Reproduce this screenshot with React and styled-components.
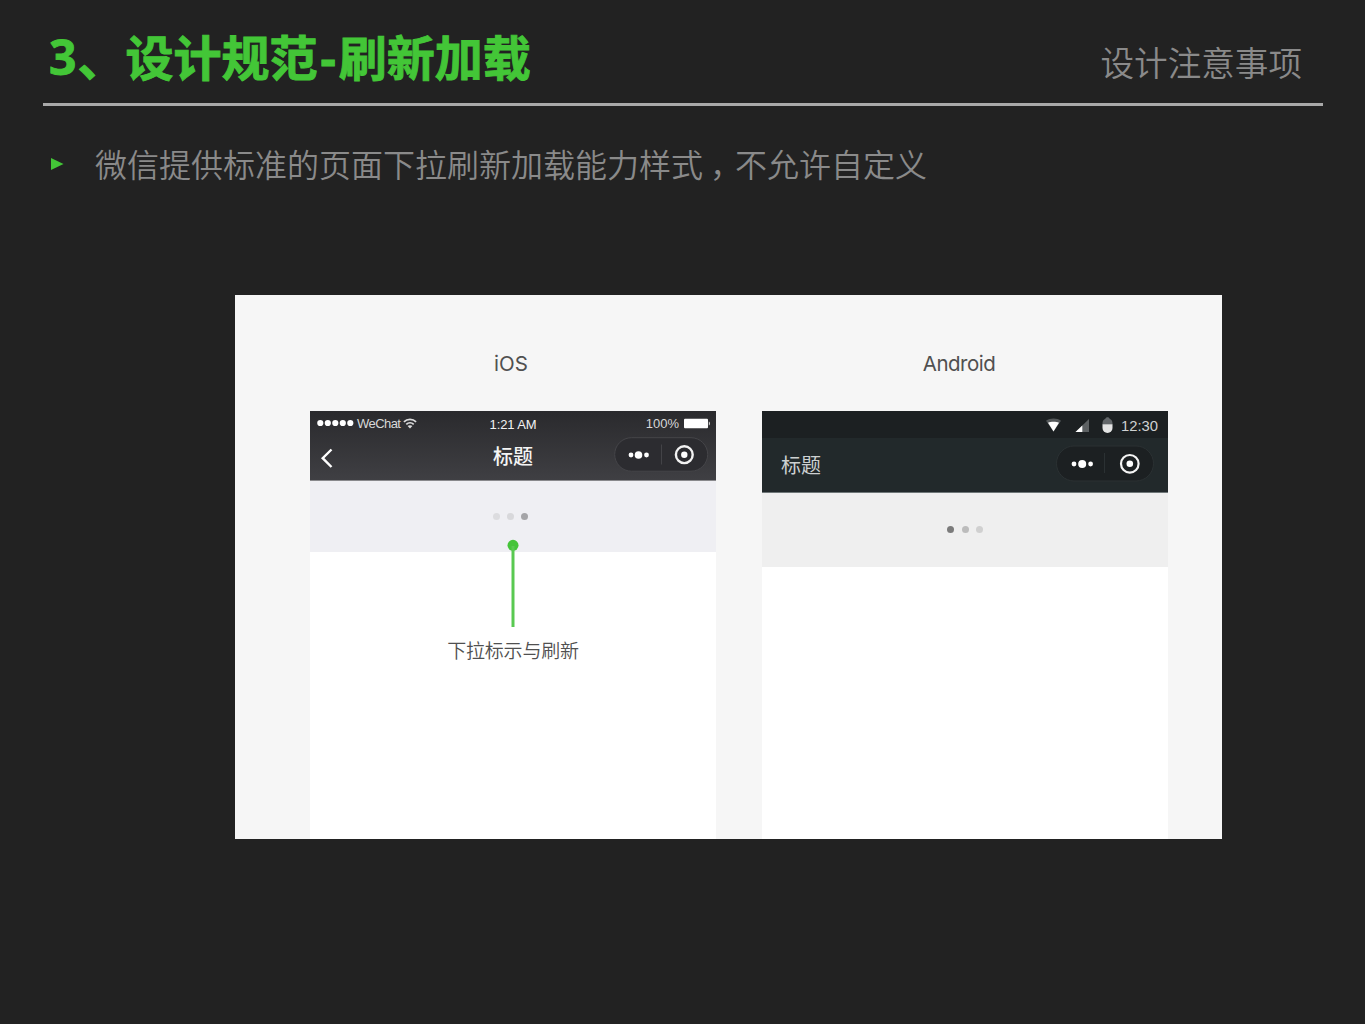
import React from "react";
import styled, { createGlobalStyle } from "styled-components";

const GlobalStyle = createGlobalStyle`
  * { box-sizing: border-box; }
  html, body { margin: 0; background: #222222; }
  body { font-family: "Noto Sans", "Noto Sans CJK SC", sans-serif; }
`;

const Slide = styled.main`
  width: 1365px;
  height: 1024px;
  padding: 0 42px 0 43px;
  background: #222222;
  overflow: hidden;
`;

const Header = styled.header`
  display: flex;
  justify-content: space-between;
  height: 106px;
  padding: 0 21px 0 6px;
  border-bottom: 3px solid #a9a9a9;
  white-space: nowrap;
`;

const Title = styled.h1`
  margin: 0;
  padding-top: 22px;
  font-size: 48px;
  line-height: 72px;
  font-weight: 700;
  color: #43c637;
  -webkit-text-stroke: 0.9px #43c637;
`;

const Numeral = styled.span`
  padding-right: 1px;
  vertical-align: 1px;
  line-height: 1;
`;

const Hyphen = styled.span`
  padding: 0 3px;
`;

const Section = styled.div`
  padding-top: 38px;
  font-size: 33.6px;
  line-height: 50px;
  font-weight: 350;
  color: #8a8a8a;
`;

const Bullet = styled.p`
  display: flex;
  align-items: center;
  margin: 34px 0 0;
  padding-left: 8px;
  height: 48px;
  font-family: "Noto Sans CJK SC", sans-serif;
  font-size: 32px;
  line-height: 48px;
  font-weight: 350;
  color: #8a8a8a;
  white-space: nowrap;
`;

const Marker = styled.svg`
  width: 13px;
  height: 12px;
  margin-right: 31px;
`;

const BulletText = styled.span`
  margin-top: -2px;
`;

const Comma = styled.span`
  margin-left: 7px;
  letter-spacing: -7px;
`;

const Board = styled.section`
  display: flex;
  gap: 46px;
  width: 987px;
  height: 544px;
  margin: 107px 0 0 192px;
  padding: 52px 54px 0 75px;
  background: #f6f6f6;
`;

const Column = styled.div`
  display: flex;
  flex-direction: column;
  width: 406px;
`;

const Platform = styled.h2`
  margin: 0 ${(p) => p.$inset || 0}px 0 0;
  height: 64px;
  font-family: Inter, sans-serif;
  font-size: 20.5px;
  font-weight: 400;
  line-height: 34px;
  letter-spacing: ${(p) => p.$tracking || 0}px;
  text-align: center;
  color: #505050;
`;

const Phone = styled.div`
  flex: 1;
  display: flex;
  flex-direction: column;
  background: #ffffff;
  font-family: "Liberation Sans", "Noto Sans CJK SC", sans-serif;
`;

const IosHead = styled.div`
  height: 70px;
  border-bottom: 1px solid #89898c;
  background: linear-gradient(#2a2a2d, #3f3f43);
  color: #f2f2f2;
`;

const IosStatus = styled.div`
  display: grid;
  grid-template-columns: 1fr auto 1fr;
  align-items: center;
  height: 25px;
  padding: 0 6px 0 7px;
  font-size: 13px;
  line-height: 25px;
`;

const StatusGroup = styled.div`
  display: flex;
  align-items: center;
  justify-content: ${(p) => (p.$end ? "flex-end" : "flex-start")};
  gap: ${(p) => p.$gap}px;
  height: 25px;
  letter-spacing: ${(p) => p.$tracking || 0}px;
  color: #d8d8d8;

  svg { margin-top: -2px; }
  span { margin-top: -1px; }
`;

const Clock = styled.span`
  padding: 1px 1px 0 0;
  letter-spacing: -0.1px;
`;

const IosNav = styled.div`
  display: grid;
  grid-template-columns: 1fr auto 1fr;
  align-items: start;
  height: 44px;
  padding: 0 7px 0 10px;
`;

const Back = styled.svg`
  width: 14px;
  height: 22px;
  margin-top: 11px;
`;

const NavTitle = styled.span`
  font-size: 20px;
  line-height: 30px;
  font-weight: ${(p) => p.$weight};
  padding-top: ${(p) => p.$top || 0}px;
  padding-right: ${(p) => p.$end || 0}px;
  margin-left: -1px;
  color: ${(p) => p.$color};
`;

const Capsule = styled.svg`
  display: block;
  justify-self: end;
  width: ${(p) => p.$w}px;
  height: ${(p) => p.$h}px;
`;

const AndroidStatus = styled.div`
  display: flex;
  align-items: center;
  justify-content: flex-end;
  height: 27px;
  padding: 2px 10px 0 0;
  background: #1c2022;
  color: #cfd1d2;
  font-size: 14.8px;
`;

const StatusIcons = styled.svg`
  width: 70px;
  height: 20px;
  margin-right: 7px;
`;

const AndroidNav = styled.div`
  display: flex;
  justify-content: space-between;
  height: 55px;
  padding: 7px 14px 0 20px;
  border-bottom: 1px solid #6f7778;
  background: #22292b;
`;

const Refresh = styled.div`
  display: flex;
  justify-content: center;
  gap: ${(p) => p.$gap}px;
  height: ${(p) => p.$h}px;
  padding: ${(p) => p.$pad};
  background: ${(p) => p.$bg};
`;

const Dot = styled.i`
  width: 7px;
  height: 7px;
  border-radius: 50%;
  background: ${(p) => p.$c};
`;

const Callout = styled.div`
  position: relative;
  display: flex;
  flex-direction: column;
  align-items: center;
  margin-top: -13px;
  font-family: "Noto Sans CJK SC", sans-serif;
  font-size: 19px;
  font-weight: 350;
  line-height: 28px;
  letter-spacing: -0.2px;
  color: #505050;
`;

const Pointer = styled.svg`
  width: 12px;
  height: 88px;
  margin-bottom: 9px;
`;

function IosCapsule() {
  return (
    <Capsule $w={95} $h={36} viewBox="0 0 95 36">
      <rect x="0.7" y="1.7" width="93" height="33.5" rx="16.7" fill="#2c2c30" stroke="#454549" />
      <path d="M47.5 8.5v20" stroke="#434347" />
      <g fill="#fff">
        <circle cx="17" cy="19" r="2.4" />
        <circle cx="24.5" cy="19" r="3.8" />
        <circle cx="32.5" cy="19" r="2.4" />
        <circle cx="70.3" cy="18.7" r="3.2" />
      </g>
      <circle cx="70.3" cy="18.7" r="8.4" fill="none" stroke="#f2f2f2" strokeWidth="2.4" />
    </Capsule>
  );
}

function AndroidCapsule() {
  return (
    <Capsule $w={98} $h={37} viewBox="0 0 98 37">
      <rect x="0.5" y="1" width="97" height="35" rx="17.5" fill="#1c2022" stroke="#2b3133" />
      <path d="M48.5 8v20" stroke="#2b3133" />
      <g fill="#fff">
        <circle cx="18" cy="19" r="2.4" />
        <circle cx="26.2" cy="19" r="4" />
        <circle cx="34.6" cy="19" r="2.4" />
        <circle cx="73.8" cy="18.8" r="3.3" />
      </g>
      <circle cx="73.8" cy="18.8" r="8.8" fill="none" stroke="#f4f4f4" strokeWidth="2.2" />
    </Capsule>
  );
}

function IosPhone() {
  return (
    <Phone>
      <IosHead>
        <IosStatus>
          <StatusGroup $gap={3} $tracking={-0.55}>
            <svg width="37" height="8" viewBox="0 0 37 8" fill="#fff">
              {[3.3, 10.8, 18.3, 25.8, 33.3].map((x) => (
                <circle key={x} cx={x} cy="4" r="3.1" />
              ))}
            </svg>
            <span>WeChat</span>
            <svg width="14" height="11" viewBox="0 0 14 11" fill="none" stroke="#dcdcdc" strokeWidth="1.7">
              <path d="M0.9 3.9C4.3 0.6 9.7 0.6 13.1 3.9" />
              <path d="M3.3 6.4c2.1-2 5.3-2 7.4 0" />
              <path d="M4.6 8.1c1.3-1.2 3.5-1.2 4.8 0L7 10.6z" fill="#dcdcdc" stroke="none" />
            </svg>
          </StatusGroup>
          <Clock>1:21 AM</Clock>
          <StatusGroup $end $gap={5}>
            <span>100%</span>
            <svg width="26" height="11" viewBox="0 0 26 11">
              <rect x="0" y="0.8" width="24" height="9.4" rx="1" fill="#fff" />
              <path d="M24.8 3.6c1.5.4 1.5 3.4 0 3.8z" fill="#ddd" />
            </svg>
          </StatusGroup>
        </IosStatus>
        <IosNav>
          <Back viewBox="0 0 14 22">
            <path d="M11.5 2.5L2.7 11.2l8.8 8.8" fill="none" stroke="#fff" strokeWidth="2.4" />
          </Back>
          <NavTitle $weight={500} $top={6} $end={2} $color="#f4f4f4">标题</NavTitle>
          <IosCapsule />
        </IosNav>
      </IosHead>
      <Refresh $gap={7} $h={71} $pad="32px 6px 0 0" $bg="#efeff3">
        <Dot $c="#dcdcdf" />
        <Dot $c="#d8d8db" />
        <Dot $c="#a5a5a8" />
      </Refresh>
      <Callout>
        <Pointer viewBox="0 0 12 88">
          <circle cx="6" cy="6.3" r="5.5" fill="#45c439" />
          <path d="M6 7v81" stroke="#59c951" strokeWidth="3" />
        </Pointer>
        下拉标示与刷新
      </Callout>
    </Phone>
  );
}

function AndroidPhone() {
  return (
    <Phone>
      <AndroidStatus>
        <StatusIcons viewBox="0 0 70 20">
          <path d="M2 4.8c4-3 11-3 15 0L9.5 15.5z" fill="#55595b" />
          <path d="M4 6.7c3-1.200 8-1.200 11 0L9.5 15.5z" fill="#fff" />
          <path d="M45 3v13H31.500z" fill="#5d6163" />
          <path d="M38.300 9.500V16h-6.800z" fill="#fff" />
          <path d="M58.500 8.500v-1c0-2.600 1-3.900 2.700-4.500 .6-2.300 4-2.300 4.600 0 1.700.6 2.700 1.900 2.700 4.500v1z" fill="#63676a" />
          <path d="M58.500 8.200h10v3.800a5 5 0 0 1-10 0z" fill="#e4e4e4" />
        </StatusIcons>
        12:30
      </AndroidStatus>
      <AndroidNav>
        <NavTitle $weight={400} $top={6} $color="#cdd0d1">标题</NavTitle>
        <AndroidCapsule />
      </AndroidNav>
      <Refresh $gap={7.5} $h={74} $pad="33px 0 0 0" $bg="#efefef">
        <Dot $c="#7b7b7b" />
        <Dot $c="#bcbcbc" />
        <Dot $c="#d0d0d0" />
      </Refresh>
    </Phone>
  );
}

export default function App() {
  return (
    <>
      <GlobalStyle />
      <Slide>
        <Header>
          <Title><Numeral>3</Numeral>、设计规范<Hyphen>-</Hyphen>刷新加载</Title>
          <Section>设计注意事项</Section>
        </Header>
        <Bullet>
          <Marker viewBox="0 0 13 12">
            <path d="M0 0l12.5 6L0 12z" fill="#43c637" />
          </Marker>
          <BulletText>微信提供标准的页面下拉刷新加载能力样式<Comma>，</Comma>不允许自定义</BulletText>
        </Bullet>
        <Board>
          <Column>
            <Platform $inset={4}>iOS</Platform>
            <IosPhone />
          </Column>
          <Column>
            <Platform $inset={12} $tracking={-0.5}>Android</Platform>
            <AndroidPhone />
          </Column>
        </Board>
      </Slide>
    </>
  );
}
